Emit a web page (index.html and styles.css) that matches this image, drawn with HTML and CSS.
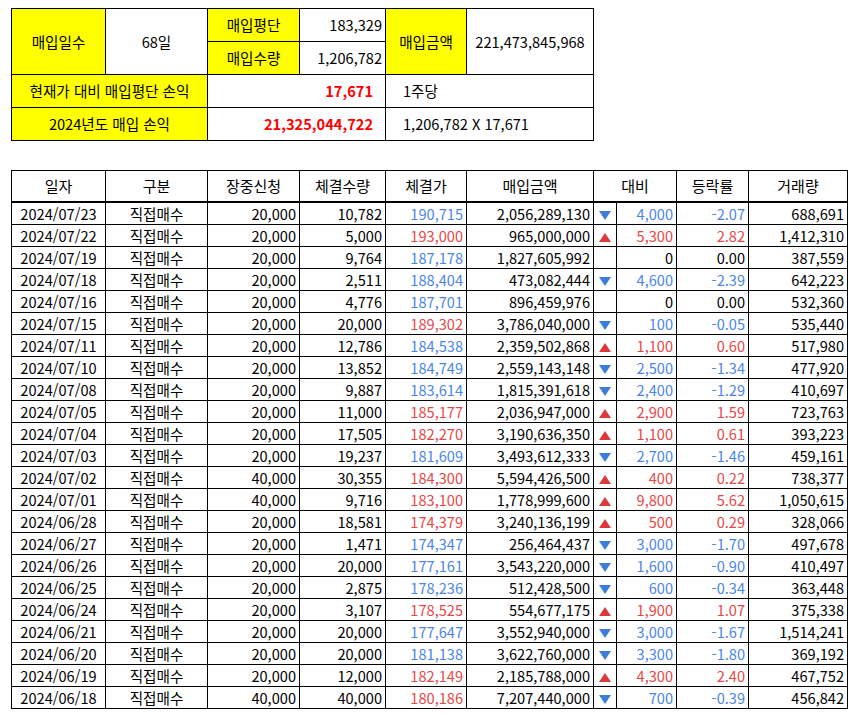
FILE: index.html
```html
<!DOCTYPE html>
<html lang="ko">
<head>
<meta charset="utf-8">
<link rel="stylesheet" href="styles.css">
</head>
<body>
<div class="page">
  <table class="summary">
    <colgroup>
      <col class="s1"><col class="s2"><col class="s3"><col class="s4"><col class="s5"><col class="s6">
    </colgroup>
    <tr>
      <td class="yl c" rowspan="2">매입일수</td>
      <td class="c" rowspan="2">68일</td>
      <td class="yl c">매입평단</td>
      <td class="r">183,329</td>
      <td class="yl c" rowspan="2">매입금액</td>
      <td class="c" rowspan="2">221,473,845,968</td>
    </tr>
    <tr>
      <td class="yl c">매입수량</td>
      <td class="r">1,206,782</td>
    </tr>
    <tr>
      <td class="yl c" colspan="2">현재가 대비 매입평단 손익</td>
      <td class="r big" colspan="2">17,671</td>
      <td class="l note" colspan="2">1주당</td>
    </tr>
    <tr>
      <td class="yl c" colspan="2">2024년도 매입 손익</td>
      <td class="r big" colspan="2">21,325,044,722</td>
      <td class="l note" colspan="2">1,206,782 X 17,671</td>
    </tr>
  </table>

  <table class="trades">
    <colgroup>
      <col class="t1"><col class="t2"><col class="t3"><col class="t4"><col class="t5"><col class="t6"><col class="t7"><col class="t8"><col class="t9"><col class="t10">
    </colgroup>
    <thead>
      <tr>
        <th>일자</th><th>구분</th><th>장중신청</th><th>체결수량</th><th>체결가</th><th>매입금액</th><th colspan="2">대비</th><th>등락률</th><th>거래량</th>
      </tr>
    </thead>
    <tbody>
      <tr><td class="c">2024/07/23</td><td class="c">직접매수</td><td class="r">20,000</td><td class="r">10,782</td><td class="r bl">190,715</td><td class="r">2,056,289,130</td><td class="arr"><span class="dn"></span></td><td class="r bl">4,000</td><td class="r bl">-2.07</td><td class="r">688,691</td></tr>
      <tr><td class="c">2024/07/22</td><td class="c">직접매수</td><td class="r">20,000</td><td class="r">5,000</td><td class="r rd">193,000</td><td class="r">965,000,000</td><td class="arr"><span class="up"></span></td><td class="r rd">5,300</td><td class="r rd">2.82</td><td class="r">1,412,310</td></tr>
      <tr><td class="c">2024/07/19</td><td class="c">직접매수</td><td class="r">20,000</td><td class="r">9,764</td><td class="r bl">187,178</td><td class="r">1,827,605,992</td><td class="arr"></td><td class="r">0</td><td class="r">0.00</td><td class="r">387,559</td></tr>
      <tr><td class="c">2024/07/18</td><td class="c">직접매수</td><td class="r">20,000</td><td class="r">2,511</td><td class="r bl">188,404</td><td class="r">473,082,444</td><td class="arr"><span class="dn"></span></td><td class="r bl">4,600</td><td class="r bl">-2.39</td><td class="r">642,223</td></tr>
      <tr><td class="c">2024/07/16</td><td class="c">직접매수</td><td class="r">20,000</td><td class="r">4,776</td><td class="r bl">187,701</td><td class="r">896,459,976</td><td class="arr"></td><td class="r">0</td><td class="r">0.00</td><td class="r">532,360</td></tr>
      <tr><td class="c">2024/07/15</td><td class="c">직접매수</td><td class="r">20,000</td><td class="r">20,000</td><td class="r rd">189,302</td><td class="r">3,786,040,000</td><td class="arr"><span class="dn"></span></td><td class="r bl">100</td><td class="r bl">-0.05</td><td class="r">535,440</td></tr>
      <tr><td class="c">2024/07/11</td><td class="c">직접매수</td><td class="r">20,000</td><td class="r">12,786</td><td class="r bl">184,538</td><td class="r">2,359,502,868</td><td class="arr"><span class="up"></span></td><td class="r rd">1,100</td><td class="r rd">0.60</td><td class="r">517,980</td></tr>
      <tr><td class="c">2024/07/10</td><td class="c">직접매수</td><td class="r">20,000</td><td class="r">13,852</td><td class="r bl">184,749</td><td class="r">2,559,143,148</td><td class="arr"><span class="dn"></span></td><td class="r bl">2,500</td><td class="r bl">-1.34</td><td class="r">477,920</td></tr>
      <tr><td class="c">2024/07/08</td><td class="c">직접매수</td><td class="r">20,000</td><td class="r">9,887</td><td class="r bl">183,614</td><td class="r">1,815,391,618</td><td class="arr"><span class="dn"></span></td><td class="r bl">2,400</td><td class="r bl">-1.29</td><td class="r">410,697</td></tr>
      <tr><td class="c">2024/07/05</td><td class="c">직접매수</td><td class="r">20,000</td><td class="r">11,000</td><td class="r rd">185,177</td><td class="r">2,036,947,000</td><td class="arr"><span class="up"></span></td><td class="r rd">2,900</td><td class="r rd">1.59</td><td class="r">723,763</td></tr>
      <tr><td class="c">2024/07/04</td><td class="c">직접매수</td><td class="r">20,000</td><td class="r">17,505</td><td class="r rd">182,270</td><td class="r">3,190,636,350</td><td class="arr"><span class="up"></span></td><td class="r rd">1,100</td><td class="r rd">0.61</td><td class="r">393,223</td></tr>
      <tr><td class="c">2024/07/03</td><td class="c">직접매수</td><td class="r">20,000</td><td class="r">19,237</td><td class="r bl">181,609</td><td class="r">3,493,612,333</td><td class="arr"><span class="dn"></span></td><td class="r bl">2,700</td><td class="r bl">-1.46</td><td class="r">459,161</td></tr>
      <tr><td class="c">2024/07/02</td><td class="c">직접매수</td><td class="r">40,000</td><td class="r">30,355</td><td class="r rd">184,300</td><td class="r">5,594,426,500</td><td class="arr"><span class="up"></span></td><td class="r rd">400</td><td class="r rd">0.22</td><td class="r">738,377</td></tr>
      <tr><td class="c">2024/07/01</td><td class="c">직접매수</td><td class="r">40,000</td><td class="r">9,716</td><td class="r rd">183,100</td><td class="r">1,778,999,600</td><td class="arr"><span class="up"></span></td><td class="r rd">9,800</td><td class="r rd">5.62</td><td class="r">1,050,615</td></tr>
      <tr><td class="c">2024/06/28</td><td class="c">직접매수</td><td class="r">20,000</td><td class="r">18,581</td><td class="r rd">174,379</td><td class="r">3,240,136,199</td><td class="arr"><span class="up"></span></td><td class="r rd">500</td><td class="r rd">0.29</td><td class="r">328,066</td></tr>
      <tr><td class="c">2024/06/27</td><td class="c">직접매수</td><td class="r">20,000</td><td class="r">1,471</td><td class="r bl">174,347</td><td class="r">256,464,437</td><td class="arr"><span class="dn"></span></td><td class="r bl">3,000</td><td class="r bl">-1.70</td><td class="r">497,678</td></tr>
      <tr><td class="c">2024/06/26</td><td class="c">직접매수</td><td class="r">20,000</td><td class="r">20,000</td><td class="r bl">177,161</td><td class="r">3,543,220,000</td><td class="arr"><span class="dn"></span></td><td class="r bl">1,600</td><td class="r bl">-0.90</td><td class="r">410,497</td></tr>
      <tr><td class="c">2024/06/25</td><td class="c">직접매수</td><td class="r">20,000</td><td class="r">2,875</td><td class="r bl">178,236</td><td class="r">512,428,500</td><td class="arr"><span class="dn"></span></td><td class="r bl">600</td><td class="r bl">-0.34</td><td class="r">363,448</td></tr>
      <tr><td class="c">2024/06/24</td><td class="c">직접매수</td><td class="r">20,000</td><td class="r">3,107</td><td class="r rd">178,525</td><td class="r">554,677,175</td><td class="arr"><span class="up"></span></td><td class="r rd">1,900</td><td class="r rd">1.07</td><td class="r">375,338</td></tr>
      <tr><td class="c">2024/06/21</td><td class="c">직접매수</td><td class="r">20,000</td><td class="r">20,000</td><td class="r bl">177,647</td><td class="r">3,552,940,000</td><td class="arr"><span class="dn"></span></td><td class="r bl">3,000</td><td class="r bl">-1.67</td><td class="r">1,514,241</td></tr>
      <tr><td class="c">2024/06/20</td><td class="c">직접매수</td><td class="r">20,000</td><td class="r">20,000</td><td class="r bl">181,138</td><td class="r">3,622,760,000</td><td class="arr"><span class="dn"></span></td><td class="r bl">3,300</td><td class="r bl">-1.80</td><td class="r">369,192</td></tr>
      <tr><td class="c">2024/06/19</td><td class="c">직접매수</td><td class="r">20,000</td><td class="r">12,000</td><td class="r rd">182,149</td><td class="r">2,185,788,000</td><td class="arr"><span class="up"></span></td><td class="r rd">4,300</td><td class="r rd">2.40</td><td class="r">467,752</td></tr>
      <tr><td class="c">2024/06/18</td><td class="c">직접매수</td><td class="r">40,000</td><td class="r">40,000</td><td class="r rd">180,186</td><td class="r">7,207,440,000</td><td class="arr"><span class="dn"></span></td><td class="r bl">700</td><td class="r bl">-0.39</td><td class="r">456,842</td></tr>
    </tbody>
  </table>
</div>
</body>
</html>
```
FILE: styles.css
```css
html, body {
  margin: 0;
  padding: 0;
  background: #ffffff;
}

.page {
  padding: 8px 0 0 11px;
  font-family: "Noto Sans CJK KR", "Noto Sans", sans-serif;
  font-size: 14.6px;
  color: #000000;
}

table {
  border-collapse: collapse;
  table-layout: fixed;
}

td, th {
  border: 1px solid #000000;
  padding: 0 3px;
  white-space: nowrap;
  overflow: hidden;
  font-weight: normal;
}

.c { text-align: center; }
.r { text-align: right; }
.l { text-align: left; }

/* summary */
.summary {
  width: 582px;
}
.summary td {
  height: 32px;
  line-height: 20px;
}
.summary .s1 { width: 94px; }
.summary .s2 { width: 102px; }
.summary .s3 { width: 92px; }
.summary .s4 { width: 86px; }
.summary .s5 { width: 81px; }
.summary .s6 { width: 127px; }

.yl { background: #ffff00; }
.big {
  color: #ff0000;
  font-weight: bold;
  padding-right: 12px;
}
.note { padding-left: 17px; }

/* trades */
.trades {
  margin-top: 29px;
  width: 836px;
}
.trades th {
  height: 30px;
  line-height: 20px;
  text-align: center;
  border-bottom: 2px solid #000000;
  font-size: 15px;
}
.trades td {
  height: 21px;
  line-height: 20px;
}
.t1 { width: 94px; }
.t2 { width: 102px; }
.t3 { width: 92px; }
.t4 { width: 86px; }
.t5 { width: 81px; }
.t6 { width: 127px; }
.t7 { width: 23px; }
.t8 { width: 60px; }
.t9 { width: 72px; }
.t10 { width: 99px; }

.bl { color: #4a86e8; }
.rd { color: #e84747; }

.trades td.arr {
  padding: 0;
  text-align: center;
}
.up, .dn {
  display: inline-block;
  width: 0;
  height: 0;
  border-left: 6px solid transparent;
  border-right: 6px solid transparent;
  vertical-align: middle;
}
.up { border-bottom: 9px solid #dc3a3a; }
.dn { border-top: 9px solid #3a7ddc; }
```
